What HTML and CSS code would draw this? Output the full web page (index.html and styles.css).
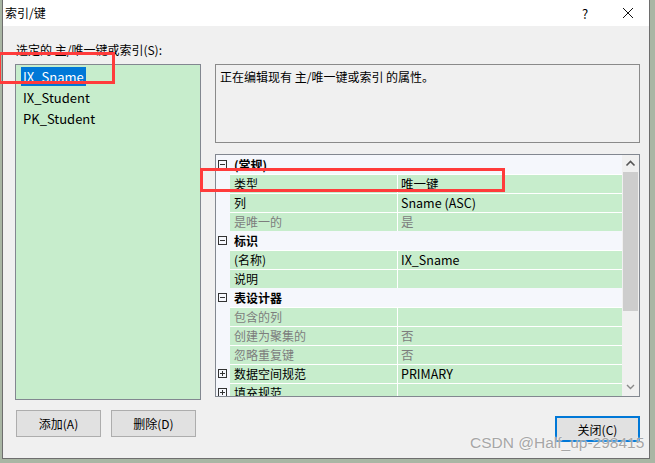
FILE: index.html
```html
<!DOCTYPE html>
<html>
<head>
<meta charset="utf-8">
<link rel="stylesheet" href="styles.css">
</head>
<body>
<div class="screen">
  <div class="window">
    <div class="titlebar">
      <span class="title">索引/键</span>
      <span class="help">?</span>
      <span class="close">
        <svg width="12" height="12" viewBox="0 0 12 12"><path d="M1 1L11 11M11 1L1 11" stroke="#111" stroke-width="1"/></svg>
      </span>
    </div>
    <div class="body">
      <div class="label">选定的 主/唯一键或索引(S):</div>
      <div class="main">
        <div class="list">
          <div class="item"><span class="sel">IX_Sname</span></div>
          <div class="item"><span>IX_Student</span></div>
          <div class="item"><span>PK_Student</span></div>
        </div>
        <div class="right">
          <div class="desc">正在编辑现有 主/唯一键或索引 的属性。</div>
          <div class="grid">
            <div class="rows">
              <div class="row head"><span class="mg"><svg width="9" height="9" viewBox="0 0 9 9"><rect x="0.5" y="0.5" width="8" height="8" fill="none" stroke="#333"/><path d="M2 4.5h5" stroke="#333"/></svg></span><span class="hn">(常规)</span></div>
              <div class="row"><span class="mg"></span><span class="nm">类型</span><span class="vl">唯一键</span></div>
              <div class="row"><span class="mg"></span><span class="nm">列</span><span class="vl">Sname (ASC)</span></div>
              <div class="row dis"><span class="mg"></span><span class="nm">是唯一的</span><span class="vl">是</span></div>
              <div class="row head"><span class="mg"><svg width="9" height="9" viewBox="0 0 9 9"><rect x="0.5" y="0.5" width="8" height="8" fill="none" stroke="#333"/><path d="M2 4.5h5" stroke="#333"/></svg></span><span class="hn">标识</span></div>
              <div class="row"><span class="mg"></span><span class="nm">(名称)</span><span class="vl">IX_Sname</span></div>
              <div class="row"><span class="mg"></span><span class="nm">说明</span><span class="vl"></span></div>
              <div class="row head"><span class="mg"><svg width="9" height="9" viewBox="0 0 9 9"><rect x="0.5" y="0.5" width="8" height="8" fill="none" stroke="#333"/><path d="M2 4.5h5" stroke="#333"/></svg></span><span class="hn">表设计器</span></div>
              <div class="row dis"><span class="mg"></span><span class="nm">包含的列</span><span class="vl"></span></div>
              <div class="row dis"><span class="mg"></span><span class="nm">创建为聚集的</span><span class="vl">否</span></div>
              <div class="row dis"><span class="mg"></span><span class="nm">忽略重复键</span><span class="vl">否</span></div>
              <div class="row"><span class="mg"><svg width="9" height="9" viewBox="0 0 9 9"><rect x="0.5" y="0.5" width="8" height="8" fill="none" stroke="#333"/><path d="M2 4.5h5M4.5 2v5" stroke="#333"/></svg></span><span class="nm">数据空间规范</span><span class="vl">PRIMARY</span></div>
              <div class="row"><span class="mg"><svg width="9" height="9" viewBox="0 0 9 9"><rect x="0.5" y="0.5" width="8" height="8" fill="none" stroke="#333"/><path d="M2 4.5h5M4.5 2v5" stroke="#333"/></svg></span><span class="nm">填充规范</span><span class="vl"></span></div>
            </div>
            <div class="scroll">
              <div class="arrow"><svg width="15" height="17" viewBox="0 0 15 17"><path d="M3.5 10.5L7.5 6.5L11.5 10.5" fill="none" stroke="#555" stroke-width="1.6"/></svg></div>
              <div class="thumb"></div>
              <div class="track"></div>
              <div class="arrow"><svg width="15" height="17" viewBox="0 0 15 17"><path d="M4 6L7.5 9.5L11 6" fill="none" stroke="#8a8a8a" stroke-width="1.4"/></svg></div>
            </div>
          </div>
        </div>
      </div>
      <div class="buttons">
        <button class="btn">添加(A)</button>
        <button class="btn">删除(D)</button>
        <span class="spacer"></span>
        <button class="btn primary">关闭(C)</button>
      </div>
    </div>
  </div>
  <div class="annot a1"></div>
  <div class="annot a2"></div>
  <div class="watermark">CSDN @Half_up-298415</div>
</div>
</body>
</html>
```

FILE: styles.css
```css
* { box-sizing: border-box; }
html, body { margin: 0; padding: 0; }
body {
  background: #a9b6a4;
  font-family: "Noto Sans CJK SC", "Microsoft YaHei", sans-serif;
  font-size: 12px;
  color: #000;
}
.screen {
  position: relative;
  width: 655px;
  height: 463px;
  overflow: hidden;
  padding-left: 2px;
}
.window {
  width: 648px;
  height: 459px;
  border: 1px solid #6e6e6e;
  border-top: none;
  display: flex;
  flex-direction: column;
  background: #f0f0f0;
}
.titlebar {
  height: 26px;
  background: #fff;
  display: flex;
  align-items: center;
  padding-left: 2px;
  flex-shrink: 0;
}
.title { flex: 1; line-height: 16px; }
.help { width: 16px; text-align: center; margin-right: 29px; font-size: 13px; }
.close { width: 12px; height: 12px; margin-right: 15px; display: flex; }
.body {
  flex: 1;
  padding: 16px 0 0 12px;
  display: flex;
  flex-direction: column;
}
.label { line-height: 16px; margin-left: 1px; height: 16px; }
.main {
  margin-top: 6px;
  display: flex;
  gap: 14px;
}
.list {
  width: 186px;
  height: 336px;
  border: 1px solid #828790;
  background: #c7edcc;
  padding: 1px 0 0 5px;
}
.item { height: 21px; padding-top: 1px; }
.item span {
  display: inline-block;
  line-height: 19px;
  height: 19px;
  padding: 0 2px;
  font-size: 13px;
}
.item .sel { background: #0078d7; color: #fff; }
.right {
  width: 425px;
  display: flex;
  flex-direction: column;
  gap: 11px;
}
.desc {
  height: 79px;
  border: 1px solid #8a8a8a;
  background: #f0f0f0;
  padding: 4px 4px;
  line-height: 16px;
}
.grid {
  height: 243px;
  border: 1px solid #828790;
  display: flex;
  background: #f5f7fc;
}
.rows { width: 406px; overflow: hidden; }
.row { display: flex; height: 19px; }
.mg {
  width: 14px;
  flex-shrink: 0;
  display: flex;
  align-items: center;
  padding-left: 2px;
  background: #f5f7fc;
}
.mg svg { display: block; }
.nm, .vl {
  background: #c7edcc;
  border-top: 1px solid #fff;
  line-height: 18px;
  padding-left: 4px;
  white-space: nowrap;
  font-size: 12px;
}
.nm { width: 168px; border-right: 1px solid #fff; }
.vl { width: 224px; padding-left: 3px; font-size: 12.5px; }
.head .hn {
  font-weight: bold;
  line-height: 19px;
  padding-left: 4px;
}
.dis .nm, .dis .vl { color: #7d7d7d; }
.scroll {
  width: 17px;
  background: #f0f0f0;
  display: flex;
  flex-direction: column;
  padding: 0 1px;
}
.arrow { height: 17px; flex-shrink: 0; }
.arrow svg { display: block; }
.thumb { height: 139px; background: #cdcdcd; flex-shrink: 0; }
.track { flex: 1; }
.buttons {
  margin-top: 10px;
  display: flex;
  align-items: flex-start;
  gap: 10px;
  width: 626px;
}
.btn {
  font-family: inherit;
  font-size: 12px;
  width: 85px;
  height: 27px;
  background: #e1e1e1;
  border: 1px solid #adadad;
  padding: 0;
  color: #000;
}
.btn:first-child { margin-left: 1px; }
.spacer { flex: 1; }
.btn.primary {
  height: 26px;
  margin-top: 6px;
  border: 2px solid #0078d7;
  margin-right: 1px;
}
.annot {
  position: absolute;
  border: 3px solid #ff3b3b;
}
.a1 { left: -2px; top: 52px; width: 117px; height: 32px; }
.a2 { left: 200px; top: 168px; width: 305px; height: 24px; }
.watermark {
  position: absolute;
  left: 470px;
  top: 434px;
  font-family: "Liberation Sans", Arial, sans-serif;
  font-size: 15.5px;
  color: #a6a6a6;
  text-shadow: 0 0 2px #fff;
}
```
